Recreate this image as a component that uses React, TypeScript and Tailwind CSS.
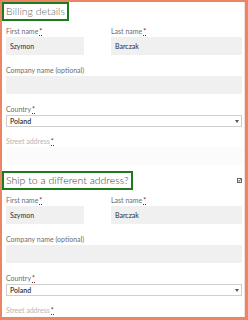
import React from 'react';

const Req: React.FC = () => (
  <abbr className="ml-[1px] text-[#7a2b2b] no-underline border-b border-dotted border-[#7a2b2b]" title="required">
    *
  </abbr>
);

const Label: React.FC<{ text: string; required?: boolean; faded?: boolean; className?: string }> = ({
  text,
  required,
  faded,
  className = '',
}) => (
  <div className={`h-[10px] text-[7px] leading-[10px] ${faded ? 'text-[#b5b5b5]' : 'text-[#6d6d6d]'} ${className}`}>
    {text}
    {required && <Req />}
  </div>
);

const Input: React.FC<{ value?: string }> = ({ value }) => (
  <div className="mt-[1px] flex h-[18px] items-center bg-[#f0f0f0] pl-[4px] text-[7px] text-[#2a2b30]">
    {value}
  </div>
);

const CountrySelect: React.FC = () => (
  <div className="mt-[1px] flex h-[12px] items-center justify-between border border-[#cfcfcf] bg-white pl-[3px] pr-[2px] text-[7px] font-semibold text-[#333]">
    <span>Poland</span>
    <svg width="4" height="3" viewBox="0 0 4 3">
      <path d="M0 0h4L2 3z" fill="#555" />
    </svg>
  </div>
);

const Section: React.FC<{ title: string; dark?: boolean; checkbox?: boolean }> = ({ title, dark, checkbox }) => (
  <div>
    <div className="flex items-center justify-between">
      <h3
        className={`h-[19px] border-2 border-[#1d7a1d] px-[2px] text-[10.5px] font-light leading-[15px] ${
          dark ? 'text-[#3c3c3c]' : 'text-[#6a6a6a]'
        }`}
      >
        {title}
      </h3>
      {checkbox && (
        <div className="flex h-[5px] w-[5px] items-center justify-center border border-[#666] bg-white">
          <svg width="3" height="3" viewBox="0 0 3 3" className="block">
            <path d="M0.3 1.5l0.9 0.9 1.5-2" stroke="#222" strokeWidth="0.8" fill="none" />
          </svg>
        </div>
      )}
    </div>
    <div className="pl-[4px]">
      <div className="mt-[5px] flex gap-[27px]">
        <div className="w-[78px]">
          <Label text="First name" required />
          <Input value="Szymon" />
        </div>
        <div className="flex-1">
          <Label text="Last name" required />
          <Input value="Barczak" />
        </div>
      </div>
      <Label text="Company name (optional)" className="mt-[10px]" />
      <Input />
      <Label text="Country" required className="mt-[10px]" />
      <CountrySelect />
      <Label text="Street address" required faded className="mt-[9px]" />
      <div className="mt-[1px] h-[18px] bg-[#fbfbfb]" />
    </div>
  </div>
);

export default function App() {
  return (
    <div
      className="h-[320px] w-[248px] overflow-hidden border-t-2 border-l-2 border-r-[3px] border-b-[3px] border-[#ec8563] bg-white"
      style={{ fontFamily: 'Lato, "Open Sans", sans-serif' }}
    >
      <div className="h-full border-r border-[#f6ddd4] pr-[2px]">
        <Section title="Billing details" />
        <div className="mt-[6px]">
          <Section title="Ship to a different address?" dark checkbox />
        </div>
      </div>
    </div>
  );
}
